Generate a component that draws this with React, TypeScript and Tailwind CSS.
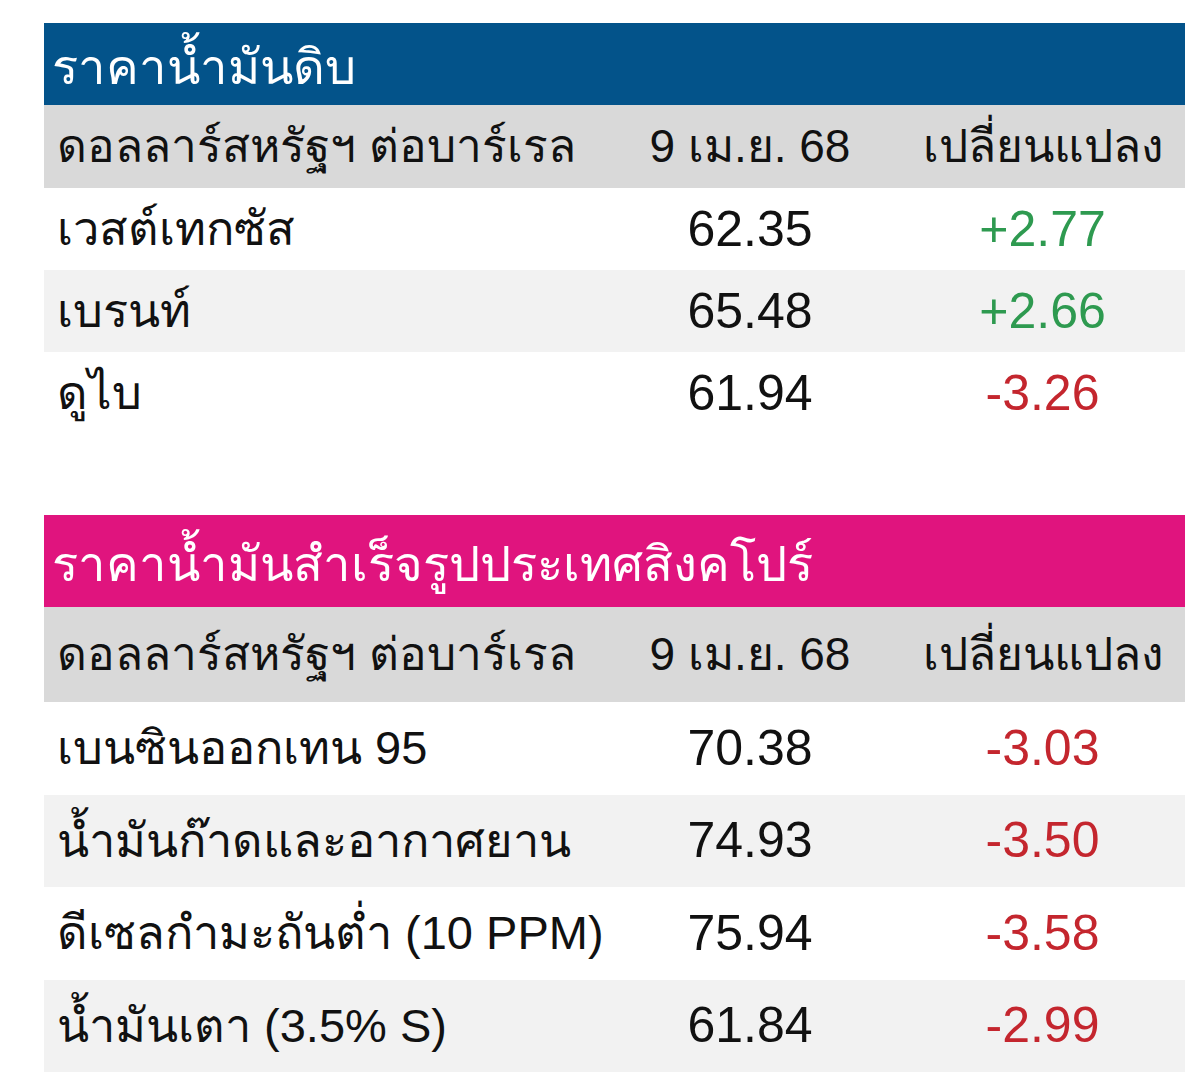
import React from "react";

type Row = { name: string; price: string; change: string; up: boolean };

const crude: Row[] = [
  { name: "เวสต์เทกซัส", price: "62.35", change: "+2.77", up: true },
  { name: "เบรนท์", price: "65.48", change: "+2.66", up: true },
  { name: "ดูไบ", price: "61.94", change: "-3.26", up: false },
];

const refined: Row[] = [
  { name: "เบนซินออกเทน 95", price: "70.38", change: "-3.03", up: false },
  { name: "น้ำมันก๊าดและอากาศยาน", price: "74.93", change: "-3.50", up: false },
  { name: "ดีเซลกำมะถันต่ำ (10 PPM)", price: "75.94", change: "-3.58", up: false },
  { name: "น้ำมันเตา (3.5% S)", price: "61.84", change: "-2.99", up: false },
];

function Table({
  title,
  titleClass,
  rows,
  rowClass,
  headClass,
}: {
  title: string;
  titleClass: string;
  rows: Row[];
  rowClass: string;
  headClass: string;
}) {
  return (
    <div className="flex flex-col">
      <div className={`flex items-center pl-[8px] pt-[8px] text-white text-[49px] ${titleClass}`}>{title}</div>
      <div className={`grid grid-cols-[556px_300px_285px] items-center bg-[#d9d9d9] text-[#111] text-[46px] ${headClass}`}>
        <div className="pl-[13px]">ดอลลาร์สหรัฐฯ ต่อบาร์เรล</div>
        <div className="text-center">9 เม.ย. 68</div>
        <div className="text-center">เปลี่ยนแปลง</div>
      </div>
      {rows.map((r, i) => (
        <div
          key={r.name}
          className={`grid grid-cols-[556px_300px_285px] items-center text-[47px] ${rowClass} ${
            i % 2 === 1 ? "bg-[#f2f2f2]" : "bg-white"
          }`}
        >
          <div className="pl-[13px] text-[#111] whitespace-nowrap">{r.name}</div>
          <div className="text-center text-[#111] text-[50px]">{r.price}</div>
          <div className={`text-center text-[50px] ${r.up ? "text-[#2e9a50]" : "text-[#c4262e]"}`}>{r.change}</div>
        </div>
      ))}
    </div>
  );
}

export default function App() {
  return (
    <div
      className="w-[1200px] h-[1084px] bg-white pl-[44px] pt-[23px]"
      style={{ fontFamily: "Tahoma, 'Liberation Sans', 'Noto Sans', sans-serif" }}
    >
      <div className="w-[1141px]">
        <Table
          title="ราคาน้ำมันดิบ"
          titleClass="h-[82px] bg-[#03538a]"
          headClass="h-[83px]"
          rowClass="h-[82px]"
          rows={crude}
        />
        <div className="h-[81px]" />
        <Table
          title="ราคาน้ำมันสำเร็จรูปประเทศสิงคโปร์"
          titleClass="h-[92px] bg-[#e0147e]"
          headClass="h-[95px]"
          rowClass="h-[92.5px]"
          rows={refined}
        />
      </div>
    </div>
  );
}
